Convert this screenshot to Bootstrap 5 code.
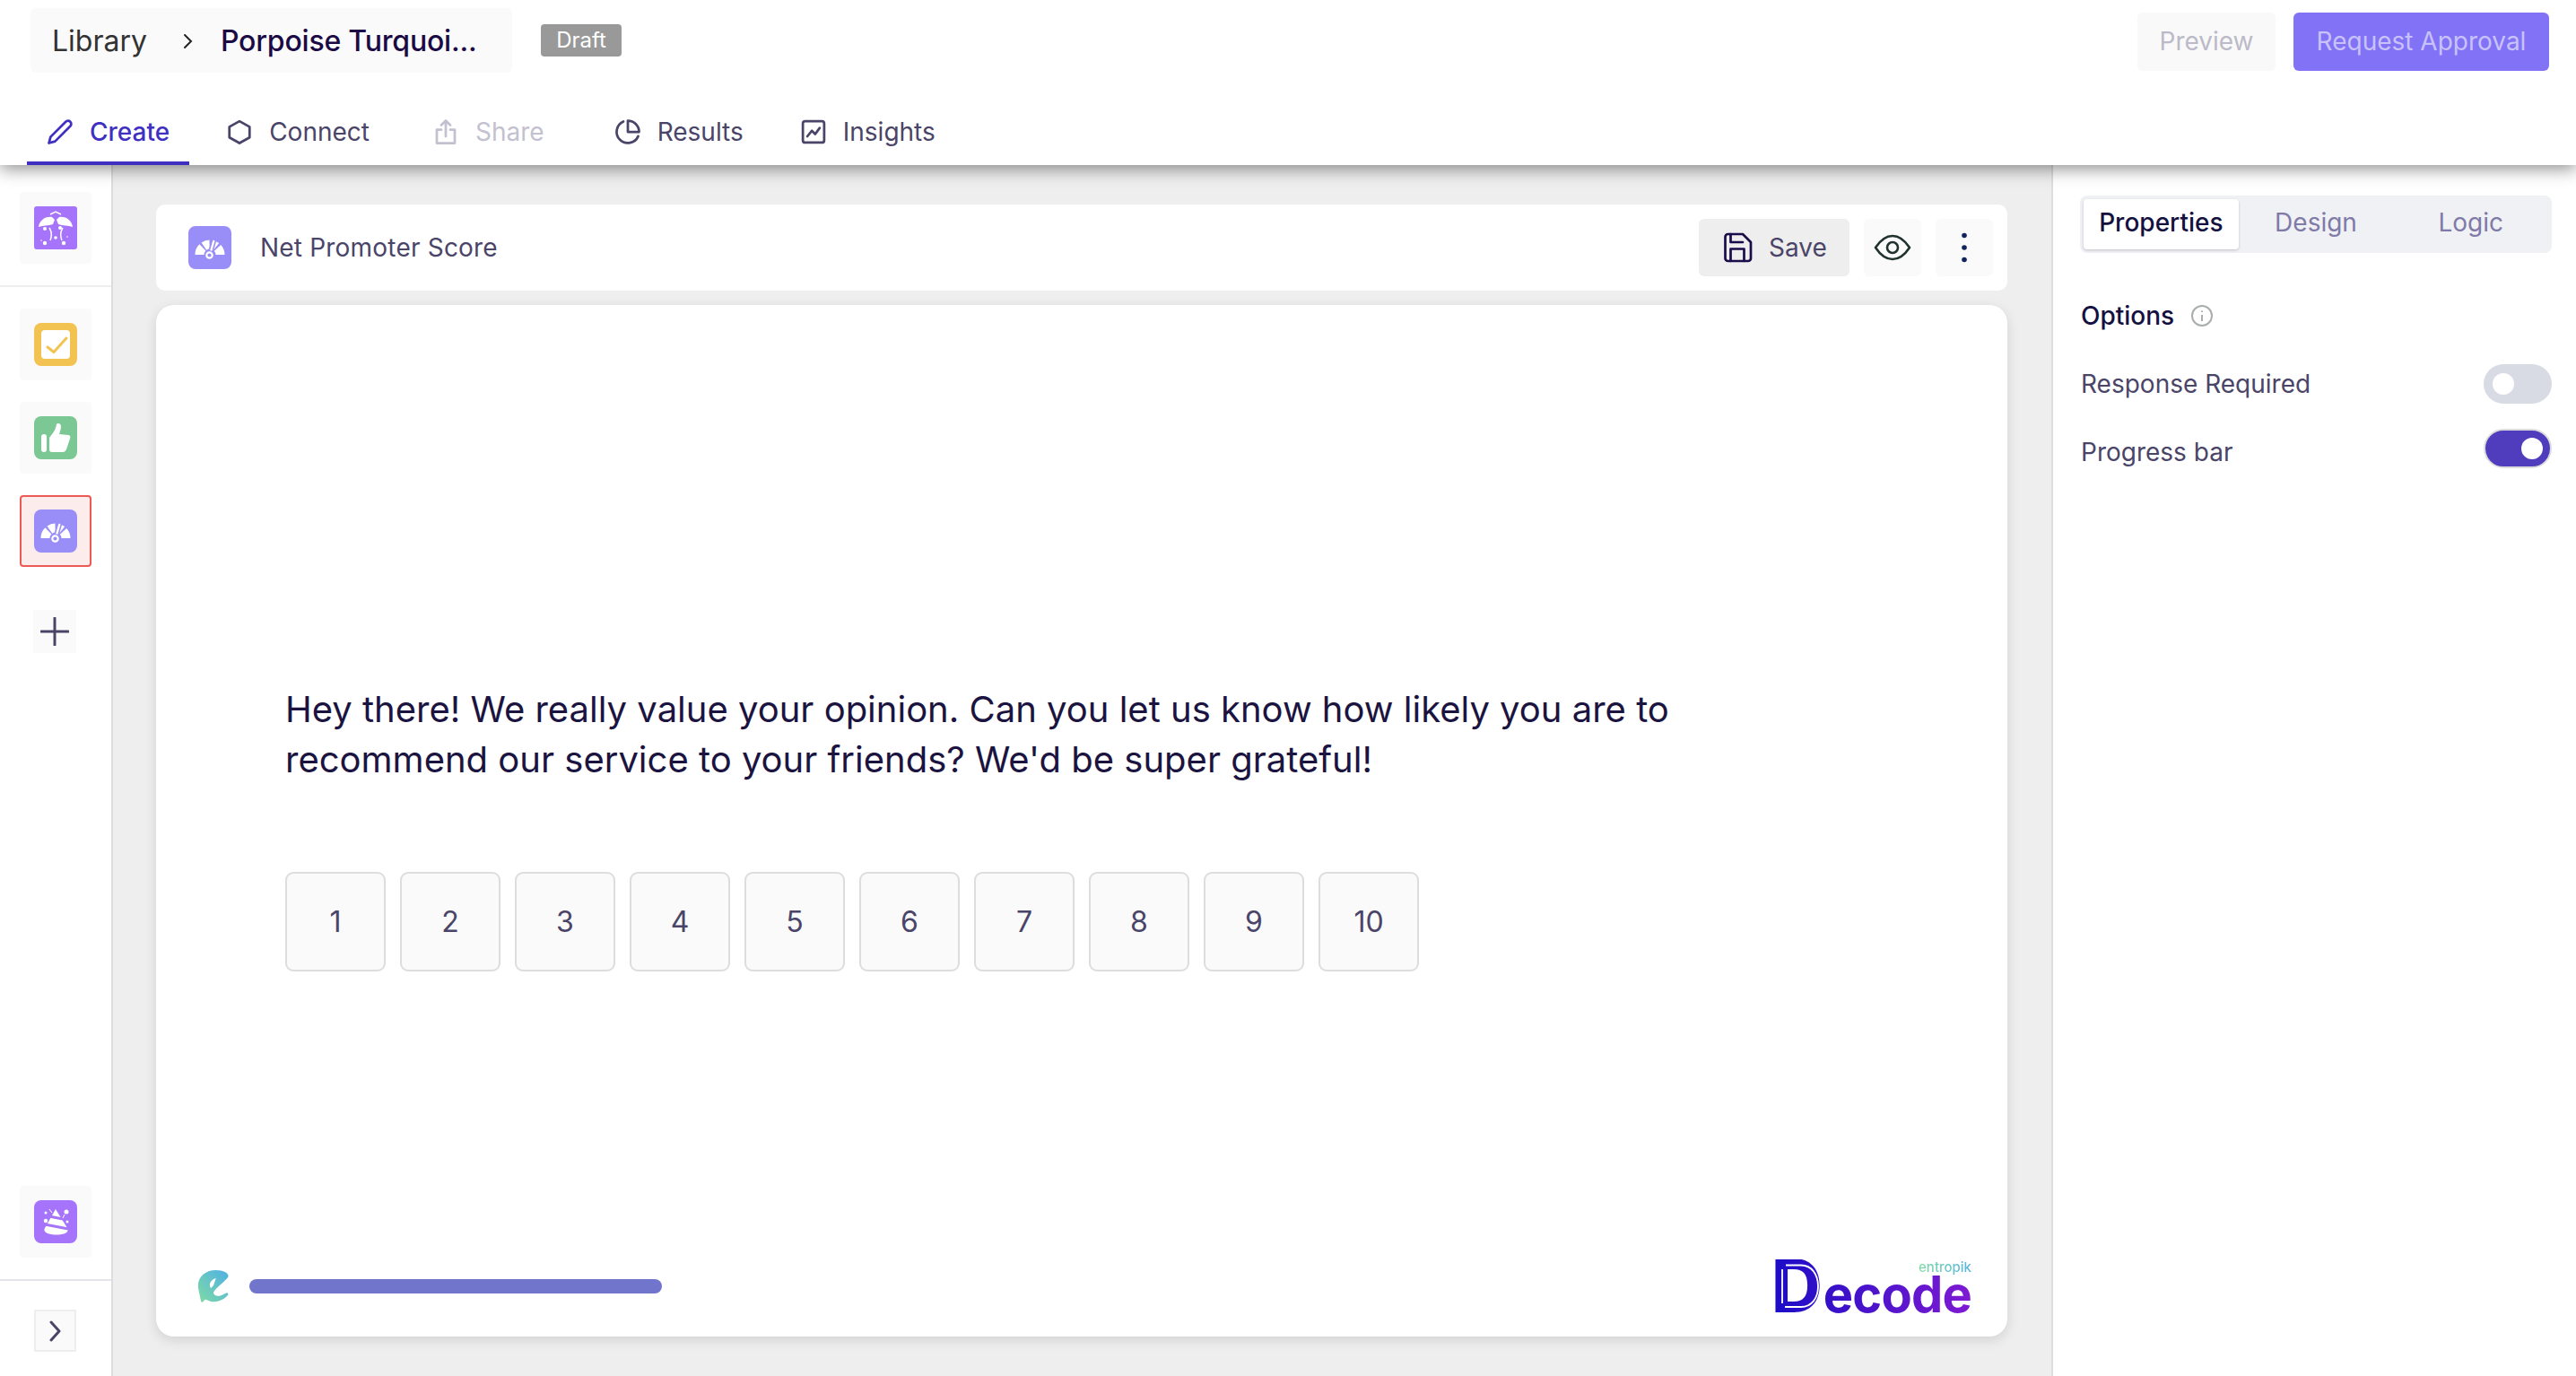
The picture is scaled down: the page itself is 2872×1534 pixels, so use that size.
<!DOCTYPE html>
<html lang="en">
<head>
<meta charset="utf-8">
<title>Net Promoter Score</title>
<link href="https://cdn.jsdelivr.net/npm/bootstrap@5.3.0/dist/css/bootstrap.min.css" rel="stylesheet">
<style>
html,body{height:100%;overflow:hidden}
body{font-family:Inter,"Liberation Sans",sans-serif;color:#4a4568;background:#eee;font-size:28px}
.app-shell{height:1534px}
.top-head{height:184px;background:#fff;box-shadow:0 4px 18px rgba(0,0,0,.45);position:relative;z-index:5;flex:none}
.top-row{height:92px;padding:0 30px 0 34px}
.crumb-box{height:72px;width:537px;background:#fafafa;border-radius:6px;padding:2px 24px 0;font-size:32px;margin-top:-2px}
.crumb-lib{color:#333}
.crumb-cur{color:#1b0a45;font-weight:500;margin-left:29px;letter-spacing:-.2px}
.crumb-sep{margin-left:39px}
.draft-tag{background:#999;color:#fff;font-size:24px;font-weight:400;height:36px;width:90px;border-radius:4px;margin-left:32px;margin-top:-2px;padding:0;line-height:36px}
.act-btn{height:65px;font-size:28px;border:0;border-radius:6px;padding:0}
.act-prev{width:154px;background:#f9f9f9;color:#bcbac8;margin-right:20px}
.act-req{width:285px;background:#8272f5;color:#c8c2fa}
.tab-row{height:92px;padding-left:30px;gap:19px;align-items:stretch}
.tab-link{display:flex;align-items:center;gap:18px;padding:22px 22px 0;color:#4a4568;font-size:28px;border-bottom:4px solid transparent;height:92px}
.tab-link.tab-on{color:#4030c2;border-bottom-color:#4030c2;font-weight:500}
.tab-link.tab-off{color:#c3c1d0;margin:0 15px 0 7px}
.tab-ico{width:30px;height:30px;fill:none;stroke:currentColor;stroke-width:2.200;stroke-linecap:round;stroke-linejoin:round}
.left-rail{width:126px;background:#fff;border-right:2px solid #ddd;flex:none;padding-top:30px}
.rail-tile{width:80px;height:80px;background:#fafafa;border-radius:4px;margin:0 0 24px 22px;display:flex;align-items:center;justify-content:center;border:2px solid transparent}
.rail-tile.tile-on{background:#fcecec;border-color:#ec5a55}
.rail-tile svg{width:48px;height:48px;display:block}
.rail-rule{height:2px;background:#eee;margin:0 0 24px 0}
.rail-plus{width:48px;height:48px;background:#fafafa;margin:24px 0 0 37px;display:flex;align-items:center;justify-content:center}
.rail-foot{margin-top:auto}
.rail-foot .rail-tile{margin-bottom:24px}
.rail-foot .rail-rule{background:#e6e4ea;margin-bottom:32px}
.rail-chev{width:47px;height:47px;background:#fafafa;border:2px solid #eee;margin:0 0 27px 38px;display:flex;align-items:center;justify-content:center}
.stage{padding:44px 49px 44px 48px;gap:16px;min-width:0}
.title-card{height:96px;border:0;border-radius:10px;flex-direction:row;align-items:center;padding:0 16px 0 36px;flex:none}
.ico-48{width:48px;height:48px;display:block;flex:none}
.title-txt{margin-left:32px;font-size:28px;letter-spacing:.2px}
.save-btn{width:168px;height:64px;background:#eee;border:0;border-radius:6px;color:#4a4568;font-size:28px;display:flex;align-items:center;padding:0 0 0 25px;gap:17px}
.icon-btn{width:64px;height:64px;background:#fafafa;border:0;border-radius:6px;padding:0;display:flex;align-items:center;justify-content:center;margin-left:16px}
.survey-card{border:0;border-radius:20px;box-shadow:0 4px 14px rgba(0,0,0,.12);padding:423px 40px 26px 144px;flex:1 1 auto}
.question{font-size:40px;line-height:56px;color:#1b1440;width:1600px;margin:0}
.score-row{gap:16px;margin-top:97px}
.score-box{width:112px;height:111px;background:#fafafa;border:2px solid #ddd;border-radius:9px;font-size:32px;color:#4a4568;padding:0}
.foot-row{margin-top:auto;margin-left:-98px;height:60px}
.e-mark{width:36px;height:36px;display:block;flex:none}
.prog-track{width:460px;height:16px;margin-left:22px;background:#7175cb;border-radius:8px}
.decode-logo{display:flex;align-items:flex-end;margin-left:auto;height:60px;font-weight:700}
.decode-d{position:relative;font-size:82px;line-height:60px;width:52px;display:block;font-weight:800}
.decode-dl{display:block;margin-left:-6px;transform:scaleX(.96);transform-origin:left center;background:linear-gradient(90deg,#1a0cc8,#3310c8);-webkit-background-clip:text;background-clip:text;color:transparent}
.decode-side{display:flex;flex-direction:column;align-items:flex-end}
.decode-rest{font-size:56px;line-height:42px;font-weight:700;letter-spacing:-.8px;background:linear-gradient(90deg,#3310c8,#7f1bd3);-webkit-background-clip:text;background-clip:text;color:transparent}
.decode-sub{font-size:15px;line-height:18px;font-weight:500;background:linear-gradient(90deg,#7fdba3,#56b5e0);-webkit-background-clip:text;background-clip:text;color:transparent}
.decode-line{position:absolute;left:0;top:0;width:52px;height:60px;fill:none;stroke:#fff;stroke-width:1.800}
.prop-panel{width:585px;background:#fff;border-left:2px solid #ddd;flex:none;padding:34px 27px 0 31px}
.seg-wrap{height:64px;background:#f0f1f5;border-radius:8px;padding:4px;align-items:stretch;margin-left:-1px}
.seg-btn{flex:1 1 0;border:0;background:transparent;color:#7f7aa8;font-size:28px;padding:0 0 4px;border-radius:4px}
.seg-btn.seg-on{background:#fff;color:#14103f;font-weight:500;box-shadow:0 1px 3px rgba(0,0,0,.2)}
.opt-title{color:#14103f;font-weight:500;margin-top:52px;height:36px;gap:18px}
.opt-row{height:44px;padding:0;margin:36px 0 0}
.opt-row.opt-next{margin-top:28px}
.opt-row.opt-next .form-check-label{padding-top:8px}
.opt-row .form-check-input{float:none;margin:0;height:44px;width:76px;border:0;background-color:#d9dbe4;border-radius:22px;--bs-form-switch-bg:url("data:image/svg+xml,%3csvg xmlns='http://www.w3.org/2000/svg' viewBox='-5.5 -5.5 11 11'%3e%3ccircle r='3' fill='%23fff'/%3e%3c/svg%3e");background-size:44px 44px;box-shadow:none}
.opt-row .form-check-input:checked{background-color:#4f3dbd;border:2px solid #ddd;--bs-form-switch-bg:url("data:image/svg+xml,%3csvg xmlns='http://www.w3.org/2000/svg' viewBox='-5 -5 10 10'%3e%3ccircle r='3' fill='%23fff'/%3e%3c/svg%3e");background-size:40px 40px}
</style>
</head>
<body>
<svg width="0" height="0" class="position-absolute">
  <symbol id="gauge" viewBox="0 0 48 48">
    <rect width="48" height="48" rx="8" fill="#998df8"/>
    <g fill="none" stroke="#fff" stroke-width="10">
      <path d="M12.500 32A11.500 11.500 0 0 1 15.870 23.870"/>
      <path d="M17.400 22.580A11.500 11.500 0 0 1 23.600 20.500"/>
      <path d="M25.600 20.600A11.500 11.500 0 0 1 31.080 22.940"/>
      <path d="M32.550 24.300A11.500 11.500 0 0 1 35.500 32"/>
    </g>
    <path d="M24 32l4.500-16" stroke="#998df8" stroke-width="5.500"/>
    <path d="M24 32l4.200-15" stroke="#fff" stroke-width="2.400" stroke-linecap="round"/>
    <circle cx="23.500" cy="32.500" r="5.500" fill="#998df8"/>
    <circle cx="23.500" cy="32.500" r="3.200" fill="none" stroke="#fff" stroke-width="2.200"/>
  </symbol>
</svg>
<div class="app-shell d-flex flex-column">
  <header class="top-head">
    <div class="top-row d-flex align-items-center">
      <nav class="crumb-box d-flex align-items-center" aria-label="breadcrumb">
        <span class="crumb-lib">Library</span>
        <svg class="crumb-sep" width="14" height="22" viewBox="0 0 14 22" fill="none" stroke="#222" stroke-width="2" stroke-linecap="round"><path d="M3 4l7 7-7 7"/></svg>
        <span class="crumb-cur">Porpoise Turquoi...</span>
      </nav>
      <span class="badge draft-tag">Draft</span>
      <button class="btn act-btn act-prev ms-auto" type="button">Preview</button>
      <button class="btn act-btn act-req" type="button">Request Approval</button>
    </div>
    <nav class="nav tab-row">
      <a class="tab-link tab-on text-decoration-none" href="#"><svg class="tab-ico" viewBox="0 0 24 24"><path d="M17 3a2.830 2.830 0 1 1 4 4L7.500 20.500 2 22l1.500-5.500L17 3z"/></svg>Create</a>
      <a class="tab-link text-decoration-none" href="#"><svg class="tab-ico" viewBox="0 0 24 24"><path d="M12 2.500l9 5v9.500l-9 5-9-5V7.500z"/></svg>Connect</a>
      <a class="tab-link tab-off text-decoration-none" href="#"><svg class="tab-ico" viewBox="0 0 24 24"><path d="M8 10H4v12h16V10h-4M12 16V2M8 6l4-4 4 4"/></svg>Share</a>
      <a class="tab-link text-decoration-none" href="#"><svg class="tab-ico" viewBox="0 0 24 24"><path d="M21.200 15.900A10 10 0 1 1 8 2.800"/><path d="M22 12A10 10 0 0 0 12 2v10z"/></svg>Results</a>
      <a class="tab-link text-decoration-none" href="#"><svg class="tab-ico" viewBox="0 0 24 24"><rect x="2.500" y="2.500" width="19" height="19" rx="2"/><path d="M6.500 16l4-5 3 3 4-5.500"/></svg>Insights</a>
    </nav>
  </header>
  <div class="d-flex flex-grow-1" style="min-height:0">
    <aside class="left-rail d-flex flex-column">
      <div class="rail-tile">
        <svg viewBox="0 0 48 48"><rect width="48" height="48" rx="3" fill="#a674fb"/><path d="M5 23c1-7 7-12 15-11l3 3-2 5c-5 2-11 1-16 3zM43 23c-1-7-7-12-15-11l-3 3 2 5c5 2 11 1 16 3z" fill="#fff"/><path d="M18 9l6-3 6 3M17 24q4 6 1 14M32 24q-4 6-1 14" fill="none" stroke="#fff" stroke-width="1.500"/><g fill="#fff"><circle cx="12" cy="25" r="2"/><circle cx="29" cy="24" r="2"/><circle cx="12" cy="41" r="2.200"/><circle cx="24" cy="35" r="1.800"/><circle cx="33" cy="41" r="2.200"/><circle cx="8" cy="38" r=".8"/><circle cx="37" cy="34" r=".8"/></g></svg>
      </div>
      <div class="rail-rule"></div>
      <div class="rail-tile">
        <svg viewBox="0 0 48 48"><rect width="48" height="48" rx="8" fill="#f2c351"/><rect x="8" y="8" width="32" height="32" rx="4" fill="#fff"/><path d="M15 27l7 5.500L36 17" fill="none" stroke="#f2c351" stroke-width="3" stroke-linecap="round" stroke-linejoin="round"/></svg>
      </div>
      <div class="rail-tile">
        <svg viewBox="0 0 48 48"><rect width="48" height="48" rx="8" fill="#7cc894"/><rect x="8" y="20" width="6" height="20" rx="3" fill="#fff"/><path d="M17 24c3-4 7-8 8-15 1-2 5-1 5 2 0 3-1 6-2 9l10 1c2 0 3 2 2 4l-4 12c-1 2-2 3-4 3H20c-2 0-3-1-3-3z" fill="#fff"/></svg>
      </div>
      <div class="rail-tile tile-on"><svg><use href="#gauge"/></svg></div>
      <div class="rail-plus"><svg width="32" height="32" viewBox="0 0 32 32" fill="none" stroke="#4a4568" stroke-width="3" stroke-linecap="round"><path d="M1 16h30M16 1v30"/></svg></div>
      <div class="rail-foot">
        <div class="rail-tile">
          <svg viewBox="0 0 48 48"><rect width="48" height="48" rx="8" fill="#a674fb"/><path d="M24 10l13 21c3 5-4 7.500-12 7.500S9 36 12 31z" fill="#fff"/><path d="M17 18l15 3M12 27l26 5" stroke="#a674fb" stroke-width="3" fill="none"/><g fill="#fff"><circle cx="13" cy="14" r="1.500"/><circle cx="36" cy="13" r="2.500"/><circle cx="13" cy="23" r="2.200"/><circle cx="37" cy="24" r="1.500"/></g><path d="M17 10l3 4M32 20l2-4" stroke="#fff" stroke-width="1"/></svg>
        </div>
        <div class="rail-rule"></div>
        <div class="rail-chev"><svg width="14" height="24" viewBox="0 0 14 24" fill="none" stroke="#4a4568" stroke-width="3" stroke-linecap="round" stroke-linejoin="round"><path d="M2 2l9 10-9 10"/></svg></div>
      </div>
    </aside>
    <main class="stage flex-grow-1 d-flex flex-column">
      <div class="card title-card d-flex">
        <svg class="ico-48"><use href="#gauge"/></svg>
        <span class="title-txt">Net Promoter Score</span>
        <button class="btn save-btn ms-auto" type="button"><svg width="36" height="36" viewBox="0 0 24 24" fill="none" stroke="#1a0b4b" stroke-width="1.800" stroke-linecap="round" stroke-linejoin="round"><path d="M19 22H5a2 2 0 0 1-2-2V4a2 2 0 0 1 2-2h11l6 6v12a2 2 0 0 1-2 2z"/><path d="M17 22v-9H7v9M7 2v6h9"/></svg>Save</button>
        <button class="btn icon-btn" type="button"><svg width="42" height="32" viewBox="0 0 42 32" fill="none" stroke="#21332f" stroke-width="2.600"><path d="M2 16C8 7 14 3 21 3s13 4 19 13c-6 9-12 13-19 13S8 25 2 16z" stroke-linejoin="round"/><circle cx="21" cy="16" r="6"/></svg></button>
        <button class="btn icon-btn" type="button"><svg width="10" height="36" viewBox="0 0 10 36" fill="#12255e"><circle cx="5" cy="4.500" r="2.800"/><circle cx="5" cy="18" r="2.800"/><circle cx="5" cy="31.500" r="2.800"/></svg></button>
      </div>
      <div class="card survey-card d-flex flex-column">
        <p class="question">Hey there! We really value your opinion. Can you let us know how likely you are to recommend our service to your friends? We'd be super grateful!</p>
        <div class="d-flex score-row">
          <button class="btn score-box" type="button">1</button>
          <button class="btn score-box" type="button">2</button>
          <button class="btn score-box" type="button">3</button>
          <button class="btn score-box" type="button">4</button>
          <button class="btn score-box" type="button">5</button>
          <button class="btn score-box" type="button">6</button>
          <button class="btn score-box" type="button">7</button>
          <button class="btn score-box" type="button">8</button>
          <button class="btn score-box" type="button">9</button>
          <button class="btn score-box" type="button">10</button>
        </div>
        <div class="d-flex align-items-center foot-row">
          <svg class="e-mark" viewBox="0 0 26 36" preserveAspectRatio="none"><defs><linearGradient id="eg" x1="0" y1="1" x2="1" y2="0"><stop offset="0" stop-color="#7fdba3"/><stop offset="1" stop-color="#4fb0e6"/></linearGradient></defs><path fill-rule="evenodd" fill="url(#eg)" d="M3 35L1 22C-1 10 5 0 15 0c6 0 10 3 10 7-1 4-11 13-12 18 0 4 5 5 8 2l3-2 1 2c-3 6-9 9-14 8-3-1-4-3-5-2l-2 3zM11 20c-2-3-1-9 4-11l-2 8z"/></svg>
          <div class="prog-track"></div>
          <div class="decode-logo">
            <span class="decode-d"><span class="decode-dl">D</span><svg class="decode-line" viewBox="0 0 52 60"><path d="M10 6.500H27C39 6.500 46 17 46 30S39 53 27 53H9M6 11V49"/></svg></span>
            <div class="decode-side"><span class="decode-sub">entropik</span><span class="decode-rest">ecode</span></div>
          </div>
        </div>
      </div>
    </main>
    <aside class="prop-panel">
      <div class="d-flex seg-wrap">
        <button class="btn seg-btn seg-on" type="button">Properties</button>
        <button class="btn seg-btn" type="button">Design</button>
        <button class="btn seg-btn" type="button">Logic</button>
      </div>
      <div class="d-flex align-items-center opt-title">Options
        <svg width="26" height="26" viewBox="0 0 26 26" fill="none" stroke="#a9adad" stroke-width="2"><circle cx="13" cy="13" r="11"/><path d="M13 12v7M13 7.500v1.500"/></svg>
      </div>
      <div class="form-check form-switch d-flex justify-content-between align-items-center opt-row">
        <label class="form-check-label" for="sw1">Response Required</label>
        <input class="form-check-input" type="checkbox" role="switch" id="sw1">
      </div>
      <div class="form-check form-switch d-flex justify-content-between align-items-center opt-row opt-next">
        <label class="form-check-label" for="sw2">Progress bar</label>
        <input class="form-check-input" type="checkbox" role="switch" id="sw2" checked>
      </div>
    </aside>
  </div>
</div>
</body>
</html>
